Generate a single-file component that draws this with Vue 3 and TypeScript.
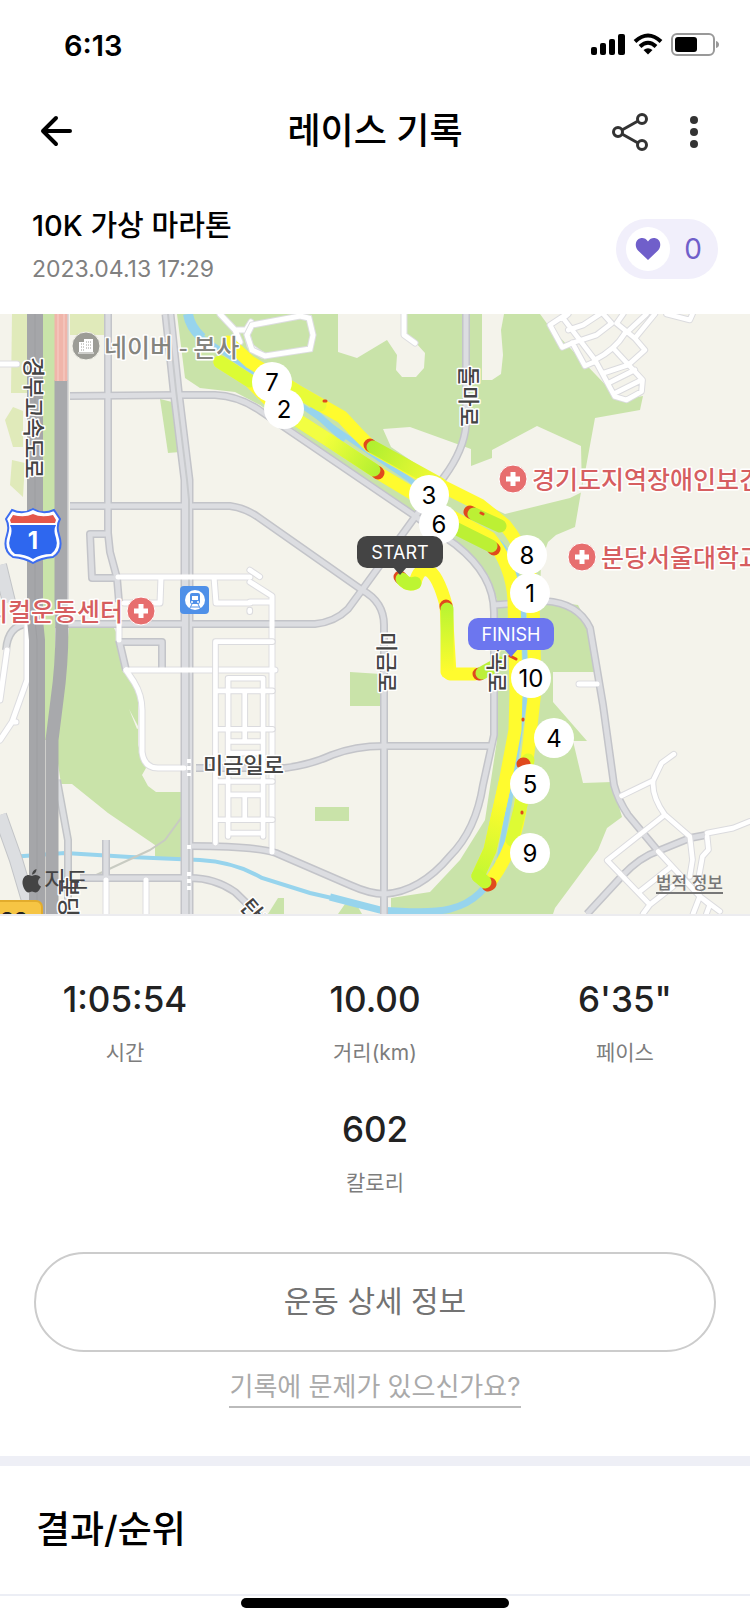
<script setup lang="ts">
interface Stat {
  value: string
  label: string
}

interface Marker {
  label: string
  x: number
  y: number
}

const stats: Stat[] = [
  { value: '1:05:54', label: '시간' },
  { value: '10.00', label: '거리(km)' },
  { value: '6\'35"', label: '페이스' },
  { value: '602', label: '칼로리' },
]

const markers: Marker[] = [
  { label: '7', x: 272, y: 382 },
  { label: '2', x: 284, y: 409 },
  { label: '3', x: 429, y: 495 },
  { label: '6', x: 439, y: 524 },
  { label: '8', x: 527, y: 555 },
  { label: '1', x: 530, y: 593 },
  { label: '10', x: 531, y: 678 },
  { label: '4', x: 554, y: 738 },
  { label: '5', x: 530, y: 784 },
  { label: '9', x: 530, y: 853 },
]

const hospitals = [
  { x: 513, y: 479 },
  { x: 582, y: 557 },
  { x: 141, y: 611 },
]

const roads: string[] = [
  'M108 314V533L110 552L117 578L119 602',
  'M70 396L176 395H215Q240 396 262 412L412 514L456 545Q494 575 494 612V735L483 785Q476 830 450 856Q420 892 384 894Q370 894 350 885L276 853Q255 846 190 846',
  'M70 506H230Q245 508 258 517L362 590Q384 602 384 625V914',
  'M108 534H90L92 578H116',
  'M466 314V425Q464 450 444 477L362 590L348 609Q335 622 315 624H70',
  'M119 642H162V672M119 640L126 670',
  'M196 768Q225 768 285 768Q310 765 332 755Q355 746 384 746H492',
  'M494 605L545 601Q578 603 590 628L603 705L614 785Q618 800 628 815L658 851',
  'M106 840V878M80 878H190Q215 878 235 892L262 918',
  'M587 914L622 876Q640 857 658 851L690 838L706 835',
]

const lanes: string[] = [
  'M0 364H17',
  'M118 577H250M161 577L160 603H124M214 577L216 603H250',
  'M27 625V680L12 722L0 740M12 722H16M7 650L0 700',
  'M119 625V640M126 670L134 682Q142 695 142 710V752Q144 768 158 768H184',
  'M126 670H275M106 880V914M146 880V914',
  'M404 314V335L415 343',
  'M579 684H597',
  'M250 582L272 596V852M250 602H272',
  'M220 314L235 330H246L251 322M235 330L240 342M246 330L250 346L262 355',
]
</script>

<template>
  <main class="screen">
    <div class="status-bar">
      <span class="clock">6:13</span>
      <svg class="status-icons" viewBox="0 0 130 26" aria-hidden="true">
        <rect x="1" y="15" width="6" height="8" rx="2" />
        <rect x="10" y="11" width="6" height="12" rx="2" />
        <rect x="19" y="7" width="6" height="16" rx="2" />
        <rect x="28" y="2" width="7" height="21" rx="2" />
        <g fill="none" stroke="#000" stroke-width="4">
          <path d="M45 9.500Q58 -2.500 71 9.500" />
          <path d="M50 14.500Q58 7 66 14.500" />
        </g>
        <path d="M53.500 18Q58 14.500 62.500 18L58 22.500Z" />
        <rect x="82" y="2" width="42" height="21" rx="5" fill="none" stroke="#999" stroke-width="2" />
        <rect x="85" y="5" width="22" height="15" rx="3" />
        <path d="M126 9Q129 10 129 12.500Q129 15 126 16Z" fill="#999" />
      </svg>
    </div>

    <header class="app-bar">
      <button class="icon-button back" type="button" aria-label="뒤로">
        <svg viewBox="0 0 36 36" width="36" height="36" fill="none" stroke="#000" stroke-width="4" stroke-linecap="round" stroke-linejoin="round">
          <path d="M32 18H5M18 5L5 18L18 31" />
        </svg>
      </button>
      <h1>레이스 기록</h1>
      <div class="actions">
        <button class="icon-button" type="button" aria-label="공유">
          <svg viewBox="0 0 40 40" width="40" height="40" fill="none" stroke="#333" stroke-width="3">
            <circle cx="8" cy="20" r="4.500" />
            <circle cx="32" cy="7" r="4.500" />
            <circle cx="32" cy="33" r="4.500" />
            <path d="M12 18L28 9M12 22L28 31" />
          </svg>
        </button>
        <button class="icon-button menu" type="button" aria-label="더보기">
          <svg viewBox="0 0 8 34" width="8" height="34" fill="#333">
            <circle cx="4" cy="5" r="4" />
            <circle cx="4" cy="17" r="4" />
            <circle cx="4" cy="29" r="4" />
          </svg>
        </button>
      </div>
    </header>

    <section class="race">
      <div class="race-title">
        <h2>10K 가상 마라톤</h2>
        <time datetime="2023-04-13T17:29">2023.04.13 17:29</time>
      </div>
      <button class="like" type="button" aria-label="좋아요 0">
        <span class="heart">
          <svg viewBox="0 0 26 24" width="26" height="24" fill="#705fca">
            <path d="M13 23L3 13.500C0 10.500 0 5 3 2.500C6 0 10.500 0.500 13 4.500C15.500 0.500 20 0 23 2.500C26 5 26 10.500 23 13.500Z" />
          </svg>
        </span>
        <span class="count">0</span>
      </button>
    </section>

    <section class="map" aria-label="코스 지도">
      <svg class="map-canvas" viewBox="0 314 750 600" preserveAspectRatio="xMidYMid slice">
        <defs>
          <linearGradient id="south-green" gradientUnits="userSpaceOnUse" x1="325" y1="440" x2="380" y2="474">
            <stop offset="0" stop-color="#f2ff3c" />
            <stop offset="1" stop-color="#b0ef30" />
          </linearGradient>
          <linearGradient id="north-green" gradientUnits="userSpaceOnUse" x1="370" y1="446" x2="440" y2="486">
            <stop offset="0" stop-color="#b0ef30" />
            <stop offset="1" stop-color="#f8fb34" />
          </linearGradient>
          <linearGradient id="down-green" gradientUnits="userSpaceOnUse" x1="448" y1="605" x2="449" y2="672">
            <stop offset="0" stop-color="#b8f532" />
            <stop offset="1" stop-color="#fffb2e" />
          </linearGradient>
          <linearGradient id="bank-green" gradientUnits="userSpaceOnUse" x1="500" y1="800" x2="478" y2="876">
            <stop offset="0" stop-color="#fffb2e" />
            <stop offset="1" stop-color="#c4f832" />
          </linearGradient>
        </defs>

        <rect x="-400" y="314" width="1600" height="600" fill="#f4f3eb" />

        <g fill="#e0eaba">
          <path d="M12 314H27V393H11Z" />
          <path d="M13 407L23 411V447H13L5 420ZM12 460L25 463L23 497L10 485Z" />
          <path d="M70 314H105V335H70Z" />
        </g>

        <g fill="#c9e3a9">
          <path d="M177 314H540L548 325L620 400L643 396L640 410L595 418L586 467L581 492L575 527L556 535L548 542L541 562L540 600L578 605L590 628L595 672H553V702L587 741H573L583 783L612 782L622 817L607 828L598 850L555 908L553 914H391L391 898L430 892L460 860L485 820L497 740V600L488 575L455 543L410 512L260 405L235 392L200 388L185 378Z" />
          <path d="M160 399L172 402L180 452L168 453Z" />
          <path d="M69 628L114 628L120 640L127 672L138 690V745L146 768L142 775L148 786L156 792H184V858H155V845L108 813L72 784H61L56 750Z" />
          <path d="M350 672L381 674V706H350ZM315 807H349V821H315ZM268 914L278 898H284V914ZM338 914L345 904L358 907L362 914Z" />
        </g>

        <g fill="#f4f3eb">
          <path d="M338 314H404V336L416 343L425 353L424 368L416 377H402L396 370L397 355L387 340L357 358L338 352Z" />
          <path d="M482 314H504L501 330L503 355L501 374L492 380H482Z" />
          <path d="M383 429L410 427L471 449V466L492 458V450L537 426L581 446L582 492L570 498L505 514L450 487L391 447Z" />
          <path d="M129 709L139 728L137 729Z" />
        </g>

        <g fill="none" stroke="#97d4ed">
          <path d="M188 314Q190 327 202 338" stroke-width="10" />
          <path d="M200 336L262 378L325 422L410 480L460 520L500 543Q515 560 523 600L526 690L510 800L498 865" stroke-width="5" />
          <path d="M310 408L345 440" stroke-width="7" />
          <path d="M498 862Q486 900 450 909Q430 914 380 910L330 897" stroke-width="7" />
          <path d="M345 901L310 893L262 878Q235 862 200 860L130 857L65 853L10 857" stroke-width="4" />
        </g>

        <g fill="none" stroke-linejoin="round">
          <path d="M0 565L9 602M0 815L16 860L32 914" stroke="#c2c4c7" stroke-width="14" />
          <path d="M0 565L9 602M0 815L16 860L32 914" stroke="#dcdee1" stroke-width="12" />
          <path d="M6 650Q8 625 28 624H70M57 780L68 840L68 900" stroke="#c2c4c7" stroke-width="8" />
          <path d="M6 650Q8 625 28 624H70M57 780L68 840L68 900" stroke="#dcdee1" stroke-width="5" />
          <path d="M92 877L150 850L165 840L184 814" stroke="#c8cbc2" stroke-width="2" />
        </g>

        <g fill="none" stroke="#dddde0" stroke-width="7" stroke-linejoin="round" stroke-linecap="round">
          <path v-for="lane in lanes" :key="lane" :d="lane" />
        </g>
        <g class="roads">
          <g stroke="#c3c4c9" stroke-width="8">
            <path v-for="road in roads" :key="road" :d="road" />
            <path d="M168 314L176 390L187 480V914" stroke-width="13" />
          </g>
          <g stroke="#dcdde1" stroke-width="5">
            <path v-for="road in roads" :key="road" :d="road" />
            <path d="M168 314L176 390L187 480V914" stroke-width="10" />
          </g>
          <path d="M168 314L176 390L187 480L189 500V914" stroke="#c8cacd" stroke-width="2" />
        </g>
        <g fill="none" stroke="#fff" stroke-width="5" stroke-linejoin="round" stroke-linecap="round">
          <path v-for="lane in lanes" :key="lane" :d="lane" />
        </g>
        <path d="M189 759V776M189 845V850M189 872V890" stroke="#fff" stroke-width="4" stroke-dasharray="4 3" />

        <!-- Residential street grids -->
        <g transform="translate(500 310) scale(0.333)">
          <g v-for="layer in ['edge', 'core']" :key="layer" :class="['streets', layer]">
            <path d="M200 12L150 45L187 112L220 98M205 12L190 25L285 150L345 260L380 270L425 245L428 210L345 120M217 98L255 168L285 155M220 98L290 75L335 40L310 12M205 60L250 45L300 12M285 150Q345 120 375 70M310 190L385 165L435 120L405 85L350 40L370 12M325 220L405 180M345 250L425 210M380 68L440 12M405 85L465 12M500 12L570 30L578 12" />
          </g>
        </g>
        <g transform="translate(0 610) scale(0.333)">
          <g v-for="layer in ['edge', 'core']" :key="layer" :class="['streets', layer]">
            <path d="M647 700V95H818M647 243H818M647 358H818M647 515H818M647 630H818M685 680V205H790V680M685 395H790M685 430H790M685 555H790M685 670H790M735 243V395M735 555V630" />
            <path d="M750 -120L780 -100M750 0V5" />
          </g>
        </g>
        <g transform="translate(500 610) scale(0.333)">
          <g v-for="layer in ['edge', 'core']" :key="layer" :class="['streets', layer]">
            <path d="M365 558L460 512L485 460L522 433M460 512Q455 560 495 615L570 680L578 750L570 800M495 615L322 752L450 885L430 912M475 725L600 860L580 912M622 680L626 720L608 740L592 830L600 860L660 905M515 770L420 845M450 885L520 830M600 860L630 885L620 912M622 670L700 655L750 635" />
          </g>
        </g>
        <path d="M252 325L300 316L309 318L313 335L310 349L265 356L252 350L247 335Z" fill="none" stroke="#dddde0" stroke-width="7" />
        <path d="M252 325L300 316L309 318L313 335L310 349L265 356L252 350L247 335Z" fill="none" stroke="#fff" stroke-width="5" />

        <!-- Expressways -->
        <g fill="none" stroke-linejoin="round">
          <path d="M49 314V740" stroke="#c9e3a9" stroke-width="12" />
          <path d="M35 314V620L37 640V914" stroke="#a5a6a9" stroke-width="16" />
          <path d="M35 314V620L37 640V914" stroke="#9d9ea1" stroke-width="1" />
          <path d="M61 380V600Q64 650 57 700L52 740V914" stroke="#a8a9ac" stroke-width="13" />
          <path d="M61 314V381" stroke="#f0b5aa" stroke-width="13" />
          <path d="M58 314V381M64 314V381" stroke="#f7d0c8" stroke-width="1" />
          <path d="M68 314V600" stroke="#c0c1c6" stroke-width="1" />
        </g>

        <!-- Recorded course -->
        <g class="course">
          <path d="M228 342L250 362L300 393L342 417L357 433L370 446L430 480L480 505L505 525Q533 560 533 600L535 690L528 753L520 810Q514 850 490 882" stroke="#fffb2e" />
          <path d="M220 362L250 381L274 405L330 441L380 474L440 510L490 538Q512 565 514 600L516 693L515 730L505 783L490 850L478 876" stroke="#fffb2e" />
          <path d="M402 579Q408 586 415 583Q419 567 428 570Q438 575 446 605L448 640L450 674H475" stroke="#fffb2e" />
          <path d="M220 362L250 381" stroke="#dcfc34" />
          <path d="M274 405L330 441" stroke="#f2fe42" />
          <path d="M286 385L320 405" stroke="#e8fb38" />
          <path d="M528 760L521 805L512 840" stroke="#defb34" />
          <g stroke="#e0491d">
            <path d="M370 445L371 446M377 472L378 473M470 512L472 513M493 548L494 549M446 606V607M479 674H480M523 764H524M488 885L490 884M400 577L401 578" />
          </g>
          <path d="M330 441L374 470" stroke="url(#south-green)" />
          <path d="M373 447L440 484" stroke="url(#north-green)" />
          <path d="M474 514L500 526M457 529L491 546" stroke="#bcf034" />
          <path d="M402 579Q408 586 415 583" stroke="#bdf532" />
          <path d="M447 609V672" stroke="url(#down-green)" />
          <path d="M482 673L500 663" stroke="#bcf03a" />
          <path d="M505 783L490 850L478 876" stroke="url(#bank-green)" />
          <path d="M478 876L485 882" stroke="#c4f832" />
        </g>
        <path d="M324 401H326M481 513L483 514M523 719V720M522 812V813M510 656L516 659" stroke="#e0491d" stroke-width="3" stroke-linecap="round" />

        <!-- Points of interest -->
        <g transform="translate(86 346)">
          <circle r="14" fill="#9c9c96" stroke="#f4f3eb" />
          <path d="M-7 6V-4H-2V-7H7V6Z" fill="#fff" />
          <path d="M-5 -2H-2M-5 1H-2M-5 4H-2M0 -4H6M0 -1H6M0 2H6" stroke="#9c9c96" stroke-dasharray="1 1" />
          <path d="M-8 7H8" stroke="#fff" />
        </g>
        <g v-for="h in hospitals" :key="h.x" :transform="`translate(${h.x} ${h.y})`">
          <circle r="14" fill="#e76e6e" stroke="#fff" />
          <path d="M0 -7V7M-7 0H7" stroke="#fff" stroke-width="5" />
        </g>
        <g transform="translate(195 600)">
          <rect x="-15" y="-14" width="29" height="28" rx="4" fill="#4f90e8" />
          <circle r="10" fill="#fff" />
          <rect x="-5" y="-7" width="10" height="11" rx="2" fill="#4f90e8" />
          <path d="M-3 -4H3V0H-3Z" fill="#fff" />
          <circle cx="-3" cy="2" r="1" fill="#fff" />
          <circle cx="3" cy="2" r="1" fill="#fff" />
          <path d="M-3 4L-6 10M3 4L6 10M-4 7H4" stroke="#4f90e8" stroke-width="1" />
        </g>
        <g transform="translate(33 536)">
          <path d="M-21 -26Q-10 -21 0 -27Q10 -21 21 -26L27 -17Q23 -10 26 -1Q31 14 20 21Q8 22 0 27Q-8 22 -20 21Q-31 14 -26 -1Q-23 -10 -27 -17Z" fill="#fff" stroke="#3d6df0" stroke-width="2" />
          <path d="M-23 -11H23Q20 -6 23 2Q26 12 18 18Q8 18 0 23Q-8 18 -18 18Q-26 12 -23 2Q-20 -6 -23 -11Z" fill="#2e67ef" />
          <path d="M-20 -21Q-8 -18 0 -22Q8 -18 20 -21L23 -16L22 -13H-22L-23 -16Z" fill="#e4574b" />
          <text class="shield" y="13">1</text>
        </g>

        <g class="labels">
          <text class="poi" x="104" y="357" fill="#85857f">네이버 - 본사</text>
          <text class="poi" x="532" y="489" fill="#d65e60">경기도지역장애인보건</text>
          <text class="poi" x="601" y="567" fill="#d65e60">분당서울대학교</text>
          <text class="poi" x="123" y="621" fill="#d65e60" text-anchor="end">메디컬운동센터</text>
          <text transform="translate(26 357) rotate(90)">경부고속도로</text>
          <text transform="translate(461 366) rotate(90)">돌마로</text>
          <text transform="translate(379 632) rotate(90)">미금로</text>
          <text transform="translate(489 632) rotate(90)">불곡로</text>
          <text x="203" y="773">미금일로</text>
          <text transform="translate(61 877) rotate(90)">분당로</text>
          <text transform="translate(239 907) rotate(50)">탄천로</text>
        </g>
        <rect x="-10" y="901" width="52" height="30" rx="6" fill="#f6c544" stroke="#e2ac2c" stroke-width="2" />
        <text class="route-no" x="14" y="928">23</text>

        <!-- Kilometre markers -->
        <g class="markers">
          <g v-for="m in markers" :key="m.label" :transform="`translate(${m.x} ${m.y})`">
            <circle r="20" />
            <text y="9">{{ m.label }}</text>
          </g>
        </g>
        <g class="flag">
          <path d="M393 567H407L400 575Z" fill="#444" />
          <rect x="357" y="536" width="86" height="32" rx="10" fill="#444" />
          <text x="400" y="559">START</text>
          <path d="M504 649H518L511 657Z" fill="#6c76ef" />
          <rect x="468" y="618" width="86" height="32" rx="10" fill="#6c76ef" />
          <text x="511" y="641">FINISH</text>
        </g>
      </svg>
      <div class="provider">
        <svg viewBox="0 0 20 24" width="20" height="24" fill="#444" aria-hidden="true">
          <path d="M10 7C12 6 14 5.500 16 6.500C17.500 7 18 8 18.500 8.500C15 11 15.500 16 19 17.500C18 20 16 23.500 13.500 23.500C12 23.500 11.500 22.500 10 22.500C8.500 22.500 8 23.500 6.500 23.500C3.500 23.500 0 17 0.500 12.500C1 8 4 6 6.500 6C8 6 9 7 10 7ZM10 5.500C10 3 12 0.500 14.500 0C14.500 3 12.500 5.500 10 5.500Z" />
        </svg>
        <span>지도</span>
      </div>
      <a class="legal" href="#legal">법적 정보</a>
    </section>

    <section class="stats" aria-label="운동 기록">
      <div v-for="stat in stats" :key="stat.label" class="stat">
        <strong>{{ stat.value }}</strong>
        <span>{{ stat.label }}</span>
      </div>
    </section>

    <section class="details">
      <button class="detail-button" type="button">운동 상세 정보</button>
      <a class="help" href="#help">기록에 문제가 있으신가요?</a>
    </section>

    <section class="ranking">
      <h2>결과/순위</h2>
    </section>
    <div class="home-indicator"></div>
  </main>
</template>

<style>
body {
  margin: 0;
  background: #fff;
}
</style>

<style scoped>
.screen {
  font-family: Inter, "Noto Sans CJK KR", sans-serif;
  color: #000;
  background: #fff;
}
h1,
h2 {
  margin: 0;
  font-weight: 500;
}
button {
  font-family: inherit;
  padding: 0;
  border: 0;
  background: none;
}
.status-bar {
  display: flex;
  justify-content: space-between;
  align-items: center;
  height: 90px;
  padding: 0 30px 0 64px;
}
.clock {
  font-size: 29px;
  font-weight: 600;
}
.status-icons {
  width: 130px;
  height: 26px;
}
.app-bar {
  display: grid;
  grid-template-columns: 1fr auto 1fr;
  align-items: center;
  height: 82px;
  padding: 0 38px;
}
.app-bar h1 {
  font-size: 36px;
  line-height: 48px;
}
.icon-button {
  display: flex;
}
.back {
  justify-self: start;
}
.actions {
  display: flex;
  justify-content: flex-end;
  align-items: center;
  gap: 40px;
  padding: 2px 14px 0 0;
}
.race {
  display: flex;
  justify-content: space-between;
  align-items: center;
  height: 142px;
  padding: 0 32px;
  box-sizing: border-box;
}
.race-title {
  padding-top: 4px;
}
.race h2 {
  font-size: 29px;
  line-height: 40px;
}
.race time {
  display: block;
  margin-top: 8px;
  font-size: 23px;
  line-height: 30px;
  color: #808080;
}
.like {
  display: flex;
  align-items: center;
  width: 102px;
  height: 60px;
  margin-top: 12px;
  padding: 0 10px;
  border-radius: 30px;
  background: #f1effb;
}
.heart {
  display: flex;
  align-items: center;
  justify-content: center;
  width: 44px;
  height: 44px;
  border-radius: 50%;
  background: #fff;
}
.count {
  flex: 1;
  padding-left: 8px;
  font-size: 28px;
  color: #705fca;
}
.map {
  position: relative;
  border-bottom: 2px solid #ececef;
}
.map-canvas {
  display: block;
  width: 100%;
  height: 600px;
}
.roads {
  fill: none;
  stroke-linejoin: round;
}
.streets {
  fill: none;
  stroke-linejoin: round;
  stroke-linecap: round;
}
.edge {
  stroke: #dbdbde;
  stroke-width: 20px;
}
.core {
  stroke: #fff;
  stroke-width: 14px;
}
.course {
  fill: none;
  stroke-width: 13px;
  stroke-linecap: round;
  stroke-linejoin: round;
}
.labels {
  font-family: "Noto Sans CJK KR", sans-serif;
  font-size: 22px;
  font-weight: 500;
  fill: #444;
  stroke: #fff;
  stroke-width: 3px;
  stroke-linejoin: round;
  paint-order: stroke;
}
.labels .poi {
  font-size: 25px;
}
.shield {
  font-size: 24px;
  font-weight: 700;
  fill: #fff;
  text-anchor: middle;
}
.route-no {
  font-size: 22px;
  font-weight: 600;
  fill: #222;
  text-anchor: middle;
}
.markers {
  font-size: 24px;
  text-anchor: middle;
}
.markers circle {
  fill: #fff;
}
.flag {
  font-size: 18px;
  text-anchor: middle;
}
.flag text {
  fill: #fff;
}
.provider {
  position: absolute;
  left: 22px;
  bottom: 18px;
  display: flex;
  align-items: center;
  gap: 2px;
  font-size: 24px;
  line-height: 30px;
  color: #444;
}
.legal {
  position: absolute;
  right: 27px;
  bottom: 20px;
  border-bottom: 2px solid #777;
  font-size: 17px;
  font-weight: 500;
  line-height: 18px;
  color: #777;
  text-decoration: none;
}
.stats {
  display: flex;
  flex-wrap: wrap;
  justify-content: center;
  row-gap: 34px;
  padding: 58px 0 52px;
}
.stat {
  display: flex;
  flex-direction: column;
  align-items: center;
  gap: 12px;
  width: 33.33%;
}
.stat strong {
  font-size: 35px;
  font-weight: 500;
  line-height: 50px;
  color: #222;
}
.stat span {
  font-size: 21px;
  line-height: 34px;
  color: #7d7d7d;
}
.details {
  display: flex;
  flex-direction: column;
  align-items: center;
  padding: 0 34px 48px;
  border-bottom: 10px solid #eeeff6;
}
.detail-button {
  width: 100%;
  height: 100px;
  padding-bottom: 6px;
  border: 2px solid #ccc;
  border-radius: 50px;
  font-size: 30px;
  color: #737373;
}
.help {
  margin-top: 16px;
  border-bottom: 2px solid #bbb;
  font-size: 26px;
  line-height: 38px;
  color: #aaa;
  text-decoration: none;
}
.ranking {
  padding: 38px 36px;
  border-bottom: 2px solid #eceef5;
}
.ranking h2 {
  font-size: 37px;
  line-height: 52px;
}
.home-indicator {
  width: 268px;
  height: 10px;
  margin: 2px auto 0;
  border-radius: 5px;
  background: #000;
}
</style>
